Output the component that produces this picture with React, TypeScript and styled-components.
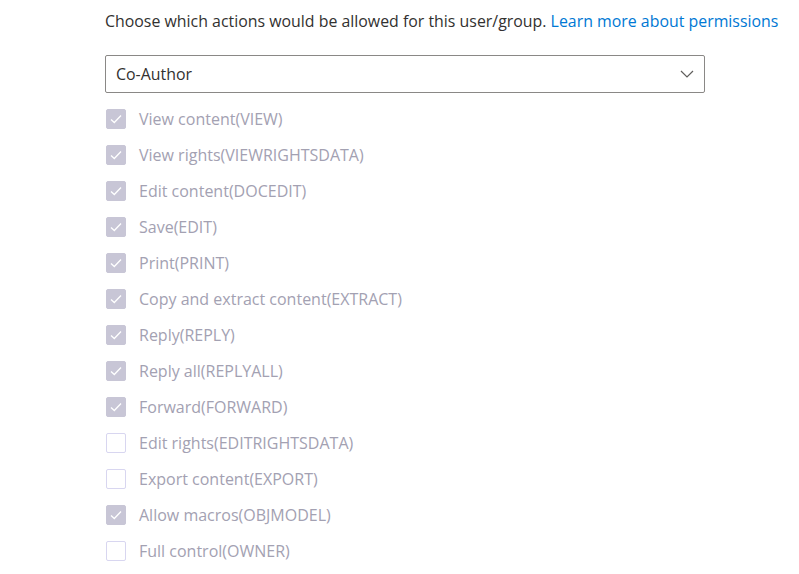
import React from "react";
import styled, { createGlobalStyle } from "styled-components";

const Global = createGlobalStyle`
  html, body { margin: 0; padding: 0; background: #fff; }
  body { font-family: "Open Sans", "Noto Sans", sans-serif; }
`;

const Page = styled.div`
  padding: 8px 0 0 105px;
  width: 600px;
  display: flex;
  flex-direction: column;
`;

const Intro = styled.p`
  margin: 0;
  white-space: nowrap;
  font-size: 15.9px;
  line-height: 26px;
  color: #323130;
`;

const Link = styled.a`
  color: #0078d4;
  text-decoration: none;
`;

const Select = styled.div`
  margin-top: 21px;
  height: 36px;
  border: 1px solid #8a8886;
  border-radius: 2px;
  display: flex;
  align-items: center;
  justify-content: space-between;
  padding: 0 10px 0 10px;
  font-size: 15.9px;
  color: #323130;
`;

const List = styled.div`
  margin-top: 8px;
  display: flex;
  flex-direction: column;
`;

const Row = styled.label`
  height: 36px;
  display: flex;
  align-items: center;
  gap: 13px;
`;

const Box = styled.span<{ $checked: boolean }>`
  width: 20px;
  height: 20px;
  box-sizing: border-box;
  margin-left: 1px;
  border-radius: 2px;
  display: flex;
  align-items: center;
  justify-content: center;
  background: ${(p) => (p.$checked ? "#c8c6d6" : "#fff")};
  border: 1px solid ${(p) => (p.$checked ? "#c8c6d6" : "#d8d6f0")};
`;

const Label = styled.span`
  font-size: 16px;
  color: #a3a1b2;
  white-space: nowrap;
`;

const items: [string, boolean][] = [
  ["View content(VIEW)", true],
  ["View rights(VIEWRIGHTSDATA)", true],
  ["Edit content(DOCEDIT)", true],
  ["Save(EDIT)", true],
  ["Print(PRINT)", true],
  ["Copy and extract content(EXTRACT)", true],
  ["Reply(REPLY)", true],
  ["Reply all(REPLYALL)", true],
  ["Forward(FORWARD)", true],
  ["Edit rights(EDITRIGHTSDATA)", false],
  ["Export content(EXPORT)", false],
  ["Allow macros(OBJMODEL)", true],
  ["Full control(OWNER)", false],
];

export default function App() {
  return (
    <>
      <Global />
      <Page>
        <Intro>
          Choose which actions would be allowed for this user/group.{" "}
          <Link href="#">Learn more about permissions</Link>
        </Intro>
        <Select>
          <span>Co-Author</span>
          <svg width="14" height="8" viewBox="0 0 14 8" fill="none">
            <path d="M1 1l6 6 6-6" stroke="#605e5c" strokeWidth="1.2" />
          </svg>
        </Select>
        <List>
          {items.map(([t, c]) => (
            <Row key={t}>
              <Box $checked={c}>
                {c && (
                  <svg width="12" height="10" viewBox="0 0 12 10" fill="none">
                    <path d="M1 5.5l3.3 3L11 1.5" stroke="#fff" strokeWidth="1.3" />
                  </svg>
                )}
              </Box>
              <Label>{t}</Label>
            </Row>
          ))}
        </List>
      </Page>
    </>
  );
}
